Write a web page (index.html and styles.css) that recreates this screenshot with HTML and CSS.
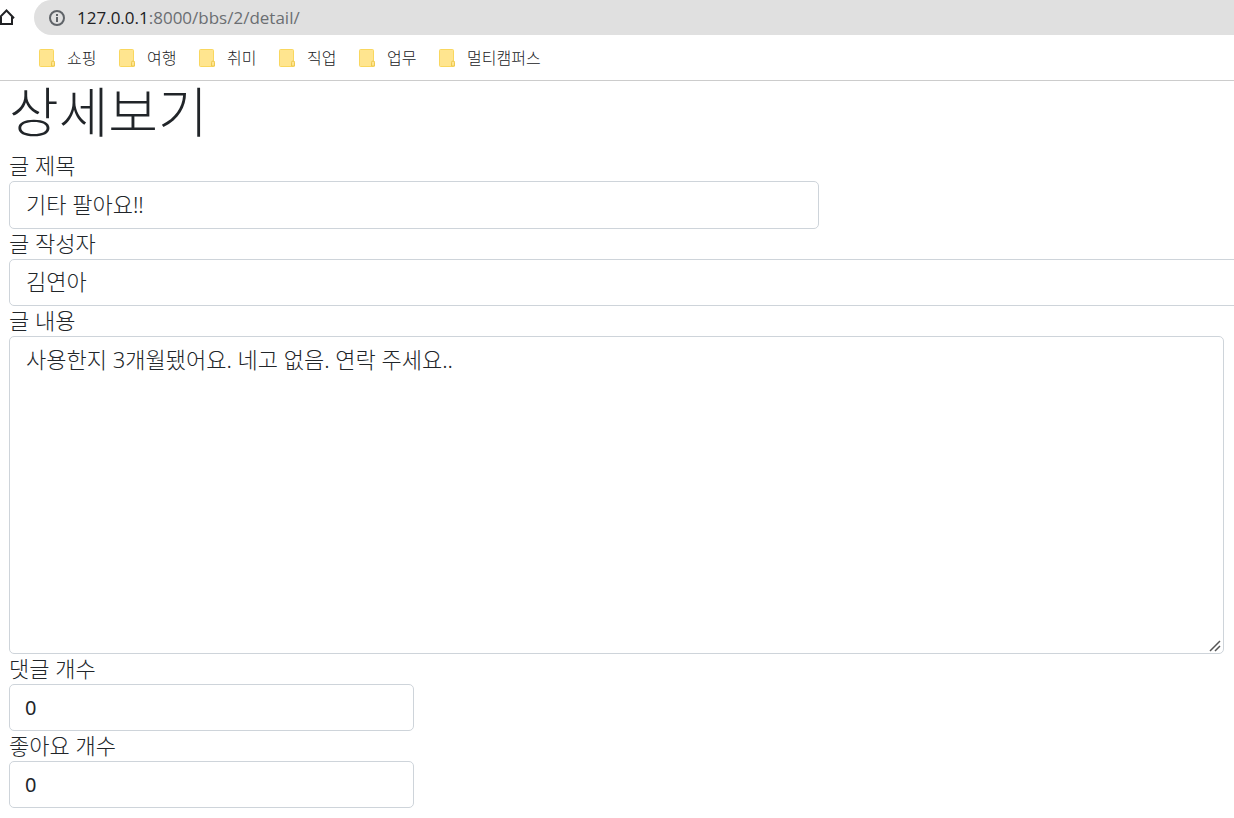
FILE: index.html
```html
<!DOCTYPE html>
<html lang="ko">
<head>
    <meta charset="UTF-8">
    <meta name="viewport" content="width=device-width, initial-scale=1.0">
    <title>상세보기</title>
    <link rel="stylesheet" href="styles.css">
</head>
<body>

<svg class="defs" width="0" height="0">
    <symbol id="folder" viewBox="0 0 17 18">
        <path d="M1.5 0.5h12a1 1 0 0 1 1 1v10.5a1.5 1.5 0 0 1 1 1.5v3a1 1 0 0 1-1 1h-13a1 1 0 0 1-1-1v-15a1 1 0 0 1 1-1z" fill="#ffe58f" stroke="#f9d75f"/>
        <path d="M12.5 17v-3.5a1.5 1.5 0 0 1 3 0v3.5z" fill="#ffe58f" stroke="#eec94f"/>
    </symbol>
</svg>

<header class="browser">
    <div class="toolbar">
        <button class="home-btn" type="button" aria-label="홈">
            <svg width="16" height="18" viewBox="0 0 16 18">
                <path d="M-1 9.2L6.5 1.5l7.500 7.700M1 8V15H12V8" fill="none" stroke="#202124" stroke-width="2"/>
            </svg>
        </button>
        <div class="address-bar">
            <svg width="16" height="16" viewBox="0 0 16 16">
                <circle cx="8" cy="8" r="7" fill="none" stroke="#5f6368" stroke-width="2"/>
                <path d="M8 4v2M8 7v5" stroke="#5f6368" stroke-width="2"/>
            </svg>
            <span class="url"><span class="host">127.0.0.1</span>:8000/bbs/2/detail/</span>
        </div>
    </div>
    <nav class="bookmarks">
        <a href="#"><svg width="17" height="18"><use href="#folder"/></svg>쇼핑</a>
        <a href="#"><svg width="17" height="18"><use href="#folder"/></svg>여행</a>
        <a href="#"><svg width="17" height="18"><use href="#folder"/></svg>취미</a>
        <a href="#"><svg width="17" height="18"><use href="#folder"/></svg>직업</a>
        <a href="#"><svg width="17" height="18"><use href="#folder"/></svg>업무</a>
        <a href="#"><svg width="17" height="18"><use href="#folder"/></svg>멀티캠퍼스</a>
    </nav>
</header>

<main class="container">
    <h1>상세보기</h1>
    <form>
        <label for="title">글 제목</label>
        <input type="text" id="title" class="form-control medium" value="기타 팔아요!!">
        <label for="writer">글 작성자</label>
        <div class="clip">
            <input type="text" id="writer" class="form-control wide" value="김연아">
        </div>
        <label for="content">글 내용</label>
        <textarea id="content" class="form-control" rows="10">사용한지 3개월됐어요. 네고 없음. 연락 주세요..</textarea>
        <label for="replyCnt">댓글 개수</label>
        <input type="text" id="replyCnt" class="form-control small" value="0">
        <label for="likeCnt">좋아요 개수</label>
        <input type="text" id="likeCnt" class="form-control small" value="0">
    </form>
</main>

</body>
</html>
```

FILE: styles.css
```css
* {
    box-sizing: border-box;
}
body {
    font-family: "Noto Sans", "Noto Sans CJK KR", sans-serif;
    font-size: 22px;
    font-weight: 300;
    line-height: 30px;
    margin: 0;
    color: #212529;
    background-color: #ffffff;
}
.defs {
    position: absolute;
}
.browser {
    border-bottom: 1px solid #cccccc;
}
.toolbar {
    display: flex;
    height: 35px;
}
.home-btn {
    width: 34px;
    padding: 0;
    border: none;
    background: none;
    cursor: pointer;
}
.home-btn svg {
    display: block;
}
.address-bar {
    flex: 1;
    display: flex;
    align-items: center;
    gap: 12px;
    padding-left: 15px;
    background: #e0e0e0;
    border-radius: 18px 0 0 18px;
}
.url {
    font-family: "Open Sans", sans-serif;
    font-size: 17px;
    font-weight: 400;
    color: #6b6e72;
}
.host {
    color: #202124;
}
.bookmarks {
    display: flex;
    gap: 22px;
    height: 45px;
    padding-left: 39px;
    align-items: center;
}
.bookmarks a {
    display: flex;
    align-items: center;
    gap: 11px;
    min-width: 58px;
    font-size: 16px;
    line-height: 20px;
    color: #202124;
    text-decoration: none;
}
.container {
    padding: 0 10px 9px 9px;
}
h1 {
    margin: 0 0 8px;
    font-size: 54px;
    font-weight: 300;
    line-height: 62px;
}
label {
    display: block;
    line-height: 28px;
    padding-bottom: 2px;
}
.form-control {
    display: block;
    width: 100%;
    height: 47px;
    padding: 5px 16px 10px;
    font: inherit;
    color: #212529;
    background: #ffffff;
    border: 1px solid #ced4da;
    border-radius: 5px;
}
textarea.form-control {
    height: auto;
    padding-top: 7px;
    padding-bottom: 9px;
}
textarea::-webkit-resizer {
    background: url("data:image/svg+xml,%3Csvg xmlns='http://www.w3.org/2000/svg' width='15' height='15'%3E%3Cpath d='M2 13L12 3M7 13L12 8' stroke='%23555' stroke-width='1.5'/%3E%3C/svg%3E") no-repeat;
}
.medium {
    width: 66.67%;
    height: 48px;
}
.form-control.small {
    width: 33.33%;
    padding: 8px 15px;
    font-size: 20px;
    font-weight: 400;
}
/* author field runs to the window edge */
.clip {
    margin-right: -10px;
    overflow: hidden;
}
.wide {
    width: 110%;
}
```
